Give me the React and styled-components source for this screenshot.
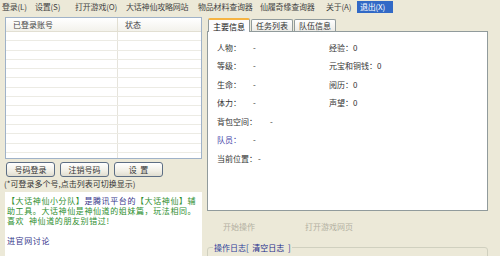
import React from 'react';
import styled, { createGlobalStyle, css } from 'styled-components';

const GlobalStyle = createGlobalStyle`
  html, body { margin: 0; padding: 0; background: #ece9d8; }
  body { font-family: "Noto Sans CJK SC", "Liberation Sans", sans-serif; }
`;

const menu = [
  { label: '登录(L)', w: 33 },
  { label: '设置(S)', w: 40 },
  { label: '打开游戏(O)', w: 51 },
  { label: '大话神仙攻略网站', w: 72 },
  { label: '物品材料查询器', w: 62 },
  { label: '仙履奇缘查询器', w: 66 },
  { label: '关于(A)', w: 31 },
  { label: '退出(X)', w: 36, active: true },
];

const stats = [
  { name: '人物：', value: '-', right: '经验：0' },
  { name: '等级：', value: '-', right: '元宝和铜钱：0' },
  { name: '生命：', value: '-', right: '阅历：0' },
  { name: '体力：', value: '-', right: '声望：0' },
  { name: '背包空间：', value: '-', w: 53 },
  { name: '队员：', value: '-', blue: true },
  { name: '当前位置：', value: '-', w: 41 },
];

function App() {
  return (
    <Window>
      <GlobalStyle />
      <MenuBar>
        {menu.map((m) => (
          <MenuItem key={m.label} $w={m.w} $active={m.active}>
            {m.label}
          </MenuItem>
        ))}
      </MenuBar>
      <Main>
        <LeftCol>
          <ListView>
            <ListHeader>
              <HeaderCell>已登录账号</HeaderCell>
              <HeaderCell>状态</HeaderCell>
            </ListHeader>
            {Array.from({ length: 14 }).map((_, i) => (
              <ListRow key={i}>
                <span />
                <span />
              </ListRow>
            ))}
          </ListView>
          <ButtonRow>
            <Button>号码登录</Button>
            <Button>注销号码</Button>
            <Button>设&nbsp;&nbsp;置</Button>
          </ButtonRow>
          <Note>(*可登录多个号,点击列表可切换显示)</Note>
          <InfoBox>
            <Line>
              <Green>【大话神仙小分队】</Green>
              <Navy>是腾讯平台的</Navy>
              <Green>【大话神仙】辅</Green>
            </Line>
            <Line>
              <Green>助工具。大话神仙是神仙道的姐妹篇，玩法相同。</Green>
            </Line>
            <Line>
              <Green>喜欢&nbsp;&nbsp;神仙道的朋友别错过!</Green>
            </Line>
            <Line />
            <Line>
              <Navy>进官网讨论</Navy>
            </Line>
          </InfoBox>
        </LeftCol>
        <RightCol>
          <TabBar>
            <Tab $selected>主要信息</Tab>
            <Tab>任务列表</Tab>
            <Tab>队伍信息</Tab>
          </TabBar>
          <TabPanel>
            {stats.map((s) => (
              <StatRow key={s.name}>
                <StatLeft>
                  <StatLabel $w={s.w} $blue={s.blue}>{s.name}</StatLabel>
                  <span>{s.value}</span>
                </StatLeft>
                {s.right && <span>{s.right}</span>}
              </StatRow>
            ))}
          </TabPanel>
          <ActionRow>
            <FlatButton $w={82}>开始操作</FlatButton>
            <FlatButton>打开游戏网页</FlatButton>
          </ActionRow>
          <LogGroup>
            <Legend>
              操作日志[&nbsp;&nbsp;<strong>清空日志</strong>&nbsp;&nbsp;]
            </Legend>
            <LogBox />
          </LogGroup>
        </RightCol>
      </Main>
    </Window>
  );
}

const Window = styled.div`
  width: 500px;
  height: 256px;
  overflow: hidden;
  background: #ece9d8;
  display: flex;
  flex-direction: column;
  color: #3a3a3a;
  font-size: 8px;
`;

const MenuBar = styled.div`
  display: flex;
  align-items: center;
  height: 14px;
  flex-shrink: 0;
  padding-left: 2px;
`;

const MenuItem = styled.div`
  width: ${(p) => p.$w}px;
  height: 12px;
  line-height: 12px;
  white-space: nowrap;
  letter-spacing: -0.2px;
  color: #444;
  ${(p) =>
    p.$active &&
    css`
      background: #3169c6;
      color: #fff;
      padding-left: 3px;
      box-sizing: border-box;
    `}
`;

const Main = styled.div`
  flex: 1;
  display: flex;
  padding-top: 3px;
  min-height: 0;
`;

const LeftCol = styled.div`
  width: 197px;
  flex-shrink: 0;
  margin-left: 5px;
  display: flex;
  flex-direction: column;
`;

const ListView = styled.div`
  height: 142px;
  flex-shrink: 0;
  box-sizing: border-box;
  border: 1px solid #9fb2c8;
  background: #fff;
  overflow: hidden;
`;

const ListHeader = styled.div`
  display: grid;
  grid-template-columns: 111px 1fr;
  height: 13px;
  background: linear-gradient(#ffffff, #f3f2ec);
  border-bottom: 1px solid #e2dfd2;
`;

const HeaderCell = styled.div`
  padding-left: 7px;
  line-height: 13px;
  color: #444;
  & + & {
    border-left: 1px solid #e2dfd2;
  }
`;

const ListRow = styled.div`
  display: grid;
  grid-template-columns: 111px 1fr;
  height: 9.3px;
  box-sizing: border-box;
  border-bottom: 1px solid #ecebe4;
  span + span {
    border-left: 1px solid #e6e4dc;
  }
`;

const ButtonRow = styled.div`
  display: flex;
  flex-shrink: 0;
  gap: 5px;
  margin-top: 3px;
  padding-left: 1px;
`;

const Button = styled.div`
  width: 49px;
  height: 15px;
  box-sizing: border-box;
  border: 1px solid #5d6e84;
  border-radius: 3px;
  background: linear-gradient(#ffffff, #f1efe6 60%, #e0ddd0);
  text-align: center;
  line-height: 13px;
  color: #333;
`;

const Note = styled.div`
  flex-shrink: 0;
  margin-top: 2px;
  height: 10px;
  line-height: 10px;
  margin-left: -1px;
  white-space: nowrap;
  color: #333;
`;

const InfoBox = styled.div`
  flex: 1;
  margin-top: 3px;
  background: #fff;
  padding: 4px 2px 0;
  font-size: 8px;
  letter-spacing: 0.6px;
  white-space: nowrap;
`;

const Line = styled.div`
  height: 10px;
  line-height: 10px;
`;

const Green = styled.span`
  color: #2f8f2f;
`;

const Navy = styled.span`
  color: #34348a;
`;

const RightCol = styled.div`
  width: 281px;
  flex-shrink: 0;
  margin-left: 5px;
  display: flex;
  flex-direction: column;
`;

const TabBar = styled.div`
  display: flex;
  flex-shrink: 0;
  height: 14px;
  align-items: flex-end;
  padding-left: 1px;
  gap: 1px;
`;

const Tab = styled.div`
  height: 12px;
  line-height: 12px;
  padding: 0 4px;
  box-sizing: border-box;
  border: 1px solid #919b9c;
  border-bottom: none;
  border-radius: 2px 2px 0 0;
  background: linear-gradient(#fefefe, #ecebe6);
  color: #333;
  ${(p) =>
    p.$selected &&
    css`
      height: 14px;
      line-height: 13px;
      background: #fcfcfe;
      border-top: 2px solid #f6b443;
      margin-bottom: -1px;
      position: relative;
      z-index: 1;
      color: #111;
    `}
`;

const TabPanel = styled.div`
  height: 180px;
  flex-shrink: 0;
  box-sizing: border-box;
  border: 1px solid #919b9c;
  background: #fff;
  padding: 6px 0 0 9px;
`;

const StatRow = styled.div`
  display: flex;
  height: 18.5px;
  align-items: center;
  color: #333;
`;

const StatLeft = styled.div`
  display: flex;
  width: 112px;
`;

const StatLabel = styled.span`
  width: ${(p) => p.$w || 36}px;
  color: ${(p) => (p.$blue ? '#3d3da6' : '#333')};
`;

const ActionRow = styled.div`
  display: flex;
  flex-shrink: 0;
  height: 26px;
  align-items: center;
  padding-left: 16px;
  margin-top: 2px;
`;

const FlatButton = styled.div`
  width: ${(p) => p.$w || 60}px;
  color: #b3b0a2;
`;

const LogGroup = styled.div`
  position: relative;
  flex-shrink: 0;
  margin-top: 8px;
  border: 1px solid #d0d0bf;
  border-radius: 3px;
  padding: 8px 4px 0 5px;
  height: 40px;
`;

const Legend = styled.div`
  position: absolute;
  top: -6px;
  left: 5px;
  padding: 0 1px;
  background: #ece9d8;
  line-height: 11px;
  color: #2d3d9a;
  white-space: nowrap;
  strong {
    font-weight: normal;
    color: #1a2a8a;
  }
`;

const LogBox = styled.div`
  height: 30px;
  border: 1px solid #7f9db9;
  background: #fff;
`;

export default App;
